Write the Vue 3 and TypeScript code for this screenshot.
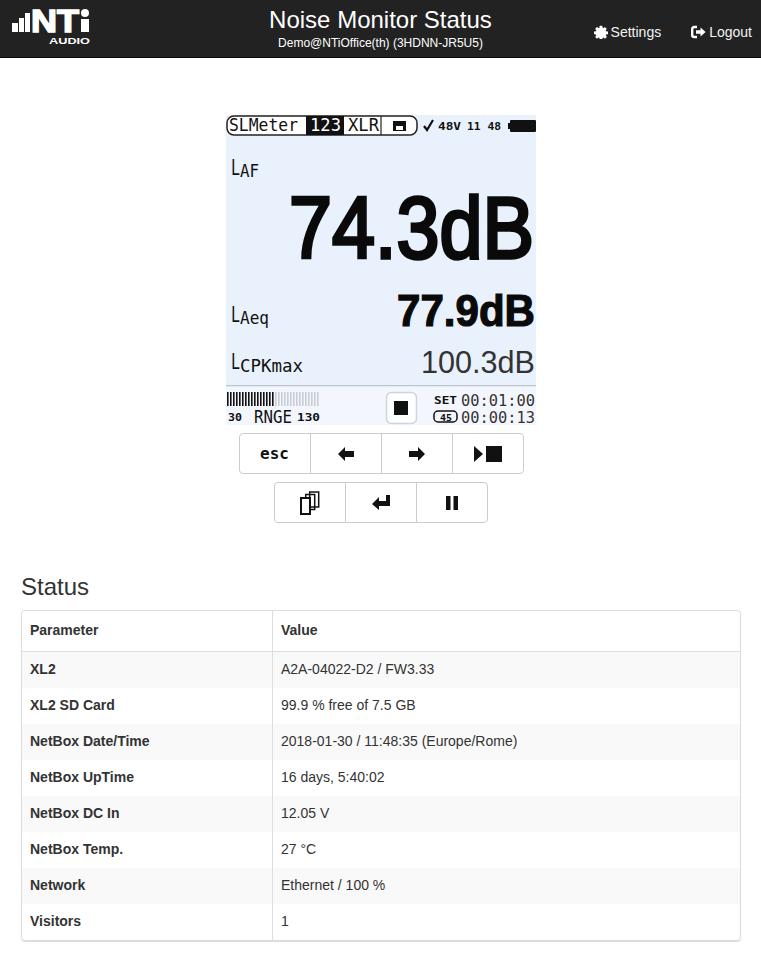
<template>
  <div class="page">
    <header class="navbar">
      <div class="brand">
        <svg width="80" height="36" viewBox="0 0 80 36">
          <rect x="0" y="13" width="6" height="9" fill="#fff" />
          <rect x="7" y="8" width="5" height="14" fill="#fff" />
          <rect x="13" y="3" width="5" height="19" fill="#fff" />
          <text x="19" y="22" class="logo-name" textLength="48" lengthAdjust="spacingAndGlyphs">NT</text>
          <circle cx="73" cy="3" r="4" fill="#fff" />
          <rect x="69" y="9" width="8" height="13" fill="#fff" />
          <text x="37" y="34" class="logo-sub" textLength="41" lengthAdjust="spacingAndGlyphs">AUDIO</text>
        </svg>
      </div>
      <div class="title">
        <h1>Noise Monitor Status</h1>
        <p>Demo@NTiOffice(th) (3HDNN-JR5U5)</p>
      </div>
      <nav class="links">
        <a>
          <svg width="14" height="14" viewBox="0 0 1536 1536"><path fill="#fff" d="M1024 640q0 106-75 181t-181 75-181-75-75-181 75-181 181-75 181 75 75 181zm512 109v222q0 12-8 23t-20 13l-185 28q-19 54-39 91 35 50 107 138 10 12 10 25t-9 23q-27 37-99 108t-94 71q-12 0-26-9l-138-108q-44 23-91 38-16 136-29 186-7 28-36 28h-222q-14 0-24.5-8.5t-11.5-21.5l-28-184q-49-16-90-37l-141 107q-10 9-25 9-14 0-25-11-126-114-165-168-7-10-7-23 0-12 8-23 15-21 51-66.5t54-70.5q-27-50-41-99l-183-27q-13-2-21-12.5t-8-23.5v-222q0-12 8-23t19-13l186-28q14-46 39-92-40-57-107-138-10-12-10-24 0-10 9-23 26-36 98.5-107.5t94.5-71.5q13 0 26 10l138 107q44-23 91-38 16-136 29-186 7-28 36-28h222q14 0 24.5 8.5t11.5 21.5l28 184q49 16 90 37l142-107q9-9 24-9 13 0 25 10 129 119 165 170 7 8 7 22 0 12-8 23-15 21-51 66.5t-54 70.5q26 50 41 98l183 28q13 2 21 12.5t8 23.5z" /></svg>
          Settings
        </a>
        <a>
          <svg width="15" height="14" viewBox="0 0 15 14"><path fill="none" stroke="#fff" stroke-width="2.4" d="M6 2H3.2Q1.2 2 1.2 4v6q0 2 2 2H6" /><path fill="#fff" d="M5 5.300h4.500V2.600L14.600 7l-5.100 4.400V8.700H5z" /></svg>
          Logout
        </a>
      </nav>
    </header>

    <main class="content">
      <div class="device">
        <svg class="screen" width="310" height="310" viewBox="0 0 310 310">
          <rect width="310" height="310" fill="#e9f1fc" />
          <rect x="1" y="1" width="190" height="19" rx="7" fill="#fff" stroke="#222" stroke-width="1.500" />
          <rect x="80" y="1" width="38" height="19" fill="#111" />
          <line x1="155" y1="1" x2="155" y2="20" stroke="#222" stroke-width="1.200" />
          <text x="3" y="16" class="lcd tab" textLength="69" lengthAdjust="spacingAndGlyphs">SLMeter</text>
          <text x="84" y="16" class="lcd tab inv" textLength="31" lengthAdjust="spacingAndGlyphs">123</text>
          <text x="122" y="16" class="lcd tab" textLength="31" lengthAdjust="spacingAndGlyphs">XLR</text>
          <path d="M167 6h13v10h-13zM170 11h7v4h-7z" fill="#111" fill-rule="evenodd" />
          <path d="M198 11l3 4 6-10" fill="none" stroke="#111" stroke-width="2.200" />
          <text x="212" y="15" class="lcd tiny" textLength="23" lengthAdjust="spacingAndGlyphs">48V</text>
          <text x="241" y="15" class="lcd tiny" textLength="34" lengthAdjust="spacingAndGlyphs">11 48</text>
          <rect x="282" y="8" width="3" height="6" fill="#111" />
          <rect x="284" y="5" width="26" height="12" rx="1" fill="#111" />

          <text x="5" y="60" class="lcd label-l" textLength="9" lengthAdjust="spacingAndGlyphs">L</text>
          <text x="14" y="62" class="lcd label-s" textLength="19" lengthAdjust="spacingAndGlyphs">AF</text>
          <text x="63" y="143" class="big" textLength="245" lengthAdjust="spacingAndGlyphs">74.3dB</text>

          <text x="5" y="207" class="lcd label-l" textLength="9" lengthAdjust="spacingAndGlyphs">L</text>
          <text x="14" y="209" class="lcd label-s" textLength="29" lengthAdjust="spacingAndGlyphs">Aeq</text>
          <text x="171" y="211" class="mid" textLength="138" lengthAdjust="spacingAndGlyphs">77.9dB</text>

          <text x="5" y="254" class="lcd label-l" textLength="9" lengthAdjust="spacingAndGlyphs">L</text>
          <text x="14" y="257" class="lcd label-s" textLength="63" lengthAdjust="spacingAndGlyphs">CPKmax</text>
          <text x="195" y="258" class="thin" textLength="114" lengthAdjust="spacingAndGlyphs">100.3dB</text>

          <rect x="0" y="270" width="310" height="1.500" fill="#bcc4cf" />
          <rect x="0" y="271.500" width="310" height="38.500" fill="#f3f7fd" />
          <rect v-for="t in ticks" :key="t.x" :x="t.x" y="277" width="1.600" height="14" :fill="t.on ? '#111' : '#c9ced6'" />
          <text x="2" y="306" class="lcd tiny" textLength="14" lengthAdjust="spacingAndGlyphs">30</text>
          <text x="28" y="308" class="lcd rnge" textLength="38" lengthAdjust="spacingAndGlyphs">RNGE</text>
          <text x="71" y="306" class="lcd tiny" textLength="23" lengthAdjust="spacingAndGlyphs">130</text>

          <rect x="160.500" y="277.500" width="30" height="31" rx="5" fill="#fdfeff" stroke="#cfd5dd" stroke-width="1.500" />
          <rect x="168" y="286" width="14" height="14" fill="#111" />

          <text x="208" y="289" class="lcd tiny" textLength="23" lengthAdjust="spacingAndGlyphs">SET</text>
          <text x="235" y="291" class="lcd time" textLength="74" lengthAdjust="spacingAndGlyphs">00:01:00</text>
          <rect x="208" y="296" width="23" height="11" rx="4" fill="none" stroke="#111" stroke-width="1.500" />
          <text x="214" y="306" class="lcd micro" textLength="12" lengthAdjust="spacingAndGlyphs">45</text>
          <text x="235" y="308" class="lcd time" textLength="74" lengthAdjust="spacingAndGlyphs">00:00:13</text>
        </svg>

        <div class="btn-group">
          <button class="esc">esc</button>
          <button>
            <svg width="16" height="14" viewBox="0 0 16 14"><path d="M0 7l7-7v4h9v6H7v4z" /></svg>
          </button>
          <button>
            <svg width="16" height="14" viewBox="0 0 16 14"><path d="M16 7L9 0v4H0v6h9v4z" /></svg>
          </button>
          <button>
            <svg width="28" height="16" viewBox="0 0 28 16"><path d="M0 0l9 8-9 8zM12 0h16v16H12z" /></svg>
          </button>
        </div>
        <div class="btn-group">
          <button>
            <svg width="20" height="24" viewBox="0 0 20 24"><path fill="#fff" stroke="#111" stroke-width="1.500" d="M9.700 1h9v15h-9zM5.700 3.500h9v15h-9z" /><path fill="#fff" stroke="#111" stroke-width="2" d="M1 7h9v16H1z" /></svg>
          </button>
          <button>
            <svg width="18" height="15" viewBox="0 0 18 15"><path d="M0 9l7-7v4h7V0h4v11H7v4z" /></svg>
          </button>
          <button>
            <svg width="12" height="14" viewBox="0 0 12 14"><path d="M0 0h4.500v14H0zM7.500 0H12v14H7.500z" /></svg>
          </button>
        </div>
      </div>

      <h2>Status</h2>
      <div class="table-wrap">
        <table>
          <thead>
            <tr><th>Parameter</th><th>Value</th></tr>
          </thead>
          <tbody>
            <tr v-for="row in rows" :key="row.name">
              <th>{{ row.name }}</th>
              <td>{{ row.value }}</td>
            </tr>
          </tbody>
        </table>
      </div>
    </main>
  </div>
</template>

<script setup lang="ts">
const rows = [
  { name: 'XL2', value: 'A2A-04022-D2 / FW3.33' },
  { name: 'XL2 SD Card', value: '99.9 % free of 7.5 GB' },
  { name: 'NetBox Date/Time', value: '2018-01-30 / 11:48:35 (Europe/Rome)' },
  { name: 'NetBox UpTime', value: '16 days, 5:40:02' },
  { name: 'NetBox DC In', value: '12.05 V' },
  { name: 'NetBox Temp.', value: '27 °C' },
  { name: 'Network', value: 'Ethernet / 100 %' },
  { name: 'Visitors', value: '1' },
]

// level bar of the meter: black up to the current reading
const ticks = Array.from({ length: 31 }, (_, i) => ({ x: 1 + i * 3, on: i < 16 }))
</script>

<style>
html,
body {
  margin: 0;
  background: #fff;
}
</style>

<style scoped>
.page {
  font-family: "Liberation Sans", Arial, sans-serif;
  font-size: 14px;
  color: #333;
  height: 972px;
  overflow: hidden;
}

.navbar {
  display: grid;
  grid-template-columns: 1fr auto 1fr;
  align-items: start;
  height: 57px;
  background: #222;
  border-bottom: 1px solid #080808;
  color: #fff;
}

.brand {
  padding: 10px 0 0 12px;
}

.brand svg {
  display: block;
  overflow: visible;
}

.logo-name {
  font: 700 32px "Liberation Sans", sans-serif;
  fill: #fff;
  stroke: #fff;
  stroke-width: 1.5px;
}

.logo-sub {
  font: 700 8.500px "Liberation Sans", sans-serif;
  fill: #fff;
}

.title {
  text-align: center;
  padding-top: 6px;
}

.title h1 {
  margin: 0;
  font-size: 24px;
  font-weight: 400;
  line-height: 28px;
}

.title p {
  margin: 2px 0 0;
  font-size: 12px;
  line-height: 14px;
}

.links {
  display: flex;
  justify-content: flex-end;
  gap: 30px;
  padding: 23px 9px 0 0;
}

.links a {
  display: flex;
  align-items: center;
  gap: 3px;
  line-height: 18px;
  color: #f2f2f2;
}

.content {
  padding: 0 20px 0 21px;
}

.device {
  display: flex;
  flex-direction: column;
  align-items: center;
  padding-top: 57px;
}

.screen {
  display: block;
  margin-bottom: 8px;
}

.lcd {
  font-family: "DejaVu Sans Mono", monospace;
  fill: #111;
}

.tab {
  font-size: 17px;
}

.inv {
  fill: #fff;
}

.tiny {
  font-size: 11px;
  font-weight: 700;
}

.micro {
  font-size: 9px;
  font-weight: 700;
}

.rnge {
  font-size: 17px;
}

.time {
  font-size: 16px;
  fill: #333;
}

.label-l {
  font-size: 21px;
}

.label-s {
  font-size: 17px;
}

.big {
  font: 400 88px "Liberation Sans", sans-serif;
  fill: #0a0a0a;
  stroke: #0a0a0a;
  stroke-width: 3.500px;
}

.mid {
  font: 700 44px "Liberation Sans", sans-serif;
  fill: #0a0a0a;
  stroke: #0a0a0a;
  stroke-width: 1.200px;
}

.thin {
  font: 400 32px "Liberation Sans", sans-serif;
  fill: #333;
}

.btn-group {
  display: flex;
  margin-bottom: 8px;
}

.btn-group button {
  display: flex;
  align-items: center;
  justify-content: center;
  width: 72px;
  height: 41px;
  margin-left: -1px;
  padding: 0;
  background: #fff;
  border: 1px solid #ccc;
  color: #111;
}

.btn-group button:first-child {
  margin-left: 0;
  border-radius: 4px 0 0 4px;
}

.btn-group button:last-child {
  border-radius: 0 4px 4px 0;
}

.btn-group svg {
  display: block;
  fill: #111;
}

.esc {
  font: 700 16px "DejaVu Sans Mono", monospace;
}

h2 {
  margin: 41px 0 9px;
  font-size: 24px;
  font-weight: 400;
  line-height: 29px;
}

.table-wrap {
  border: 1px solid #ddd;
  border-radius: 4px;
  box-shadow: 0 1px 1px rgba(0, 0, 0, 0.15);
  overflow: hidden;
}

table {
  width: 100%;
  border-collapse: collapse;
  table-layout: fixed;
}

th,
td {
  padding: 7px 8px 9px;
  height: 20px;
  line-height: 20px;
  text-align: left;
}

th:first-child {
  width: 234px;
  border-right: 1px solid #ddd;
}

thead th {
  height: 24px;
  border-bottom: 1px solid #ddd;
}

tbody tr:nth-child(odd) {
  background: #f9f9f9;
}
</style>
